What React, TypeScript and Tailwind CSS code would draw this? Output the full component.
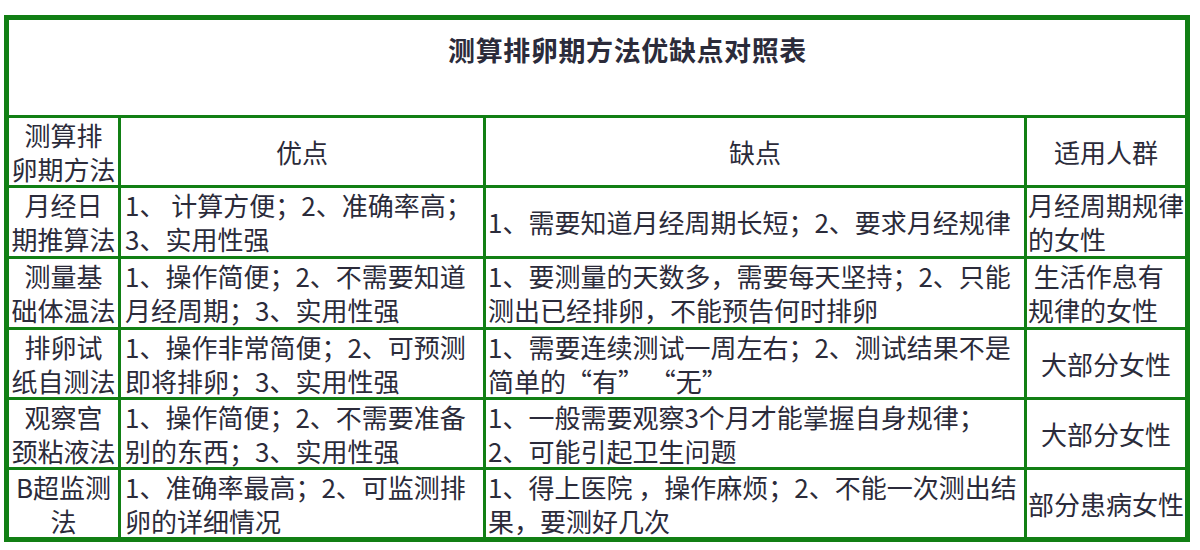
import React from "react";

type Row = {
  method: string[];
  pros: string[];
  cons: string[];
  who: string[];
  whoAlign: "left" | "center";
};

const rows: Row[] = [
  {
    method: ["月经日", "期推算法"],
    pros: ["1、 计算方便；2、准确率高；", "3、实用性强"],
    cons: ["1、需要知道月经周期长短；2、要求月经规律"],
    who: ["月经周期规律", "的女性"],
    whoAlign: "left",
  },
  {
    method: ["测量基", "础体温法"],
    pros: ["1、操作简便；2、不需要知道", "月经周期；3、实用性强"],
    cons: ["1、要测量的天数多，需要每天坚持；2、只能", "测出已经排卵，不能预告何时排卵"],
    who: ["\u00a0生活作息有", "规律的女性"],
    whoAlign: "left",
  },
  {
    method: ["排卵试", "纸自测法"],
    pros: ["1、操作非常简便；2、可预测", "即将排卵；3、实用性强"],
    cons: ["1、需要连续测试一周左右；2、测试结果不是", "简单的“有” “无”"],
    who: ["大部分女性"],
    whoAlign: "center",
  },
  {
    method: ["观察宫", "颈粘液法"],
    pros: ["1、操作简便；2、不需要准备", "别的东西；3、实用性强"],
    cons: ["1、一般需要观察3个月才能掌握自身规律；", "2、可能引起卫生问题"],
    who: ["大部分女性"],
    whoAlign: "center",
  },
  {
    method: ["B超监测", "法"],
    pros: ["1、准确率最高；2、可监测排", "卵的详细情况"],
    cons: ["1、得上医院 ，操作麻烦；2、不能一次测出结", "果，要测好几次"],
    who: ["部分患病女性"],
    whoAlign: "center",
  },
];

function Lines({ lines }: { lines: string[] }) {
  return (
    <div>
      {lines.map((l, i) => (
        <div key={i} className="whitespace-nowrap">
          {l}
        </div>
      ))}
    </div>
  );
}

export default function App() {
  return (
    <div className="w-[1200px] h-[550px] bg-white pt-[15px] pl-[4px] font-['Noto_Sans_CJK_SC',sans-serif] text-[#2b2b3a]">
      <div className="grid w-[1186px] grid-cols-[109px_362px_538px_158px] grid-rows-[95px_67px_68px_68px_67px_67px_67px] gap-[3px] bg-[#117f14] p-[5px] text-[26px] leading-[34px]">
        {/* Title */}
        <div className="col-span-4 bg-white pt-[10px] pl-[61px] text-center text-[27px] leading-[40px] font-bold tracking-[0.6px]">
          测算排卵期方法优缺点对照表
        </div>

        {/* Header */}
        <div className="flex items-center justify-center bg-white text-center">
          <Lines lines={["测算排", "卵期方法"]} />
        </div>
        <div className="flex items-center justify-center bg-white">优点</div>
        <div className="flex items-center justify-center bg-white">缺点</div>
        <div className="flex items-center justify-center bg-white">适用人群</div>

        {rows.map((r, i) => (
          <React.Fragment key={i}>
            <div className="flex items-center justify-center bg-white text-center">
              <Lines lines={r.method} />
            </div>
            <div className="flex items-center bg-white pl-[4px]">
              <Lines lines={r.pros} />
            </div>
            <div className="flex items-center bg-white pl-[2px]">
              <Lines lines={r.cons} />
            </div>
            {r.whoAlign === "center" ? (
              <div className="flex items-center justify-center bg-white text-center">
                <Lines lines={r.who} />
              </div>
            ) : (
              <div className="flex items-center bg-white pl-[1px]">
                <Lines lines={r.who} />
              </div>
            )}
          </React.Fragment>
        ))}
      </div>
    </div>
  );
}
